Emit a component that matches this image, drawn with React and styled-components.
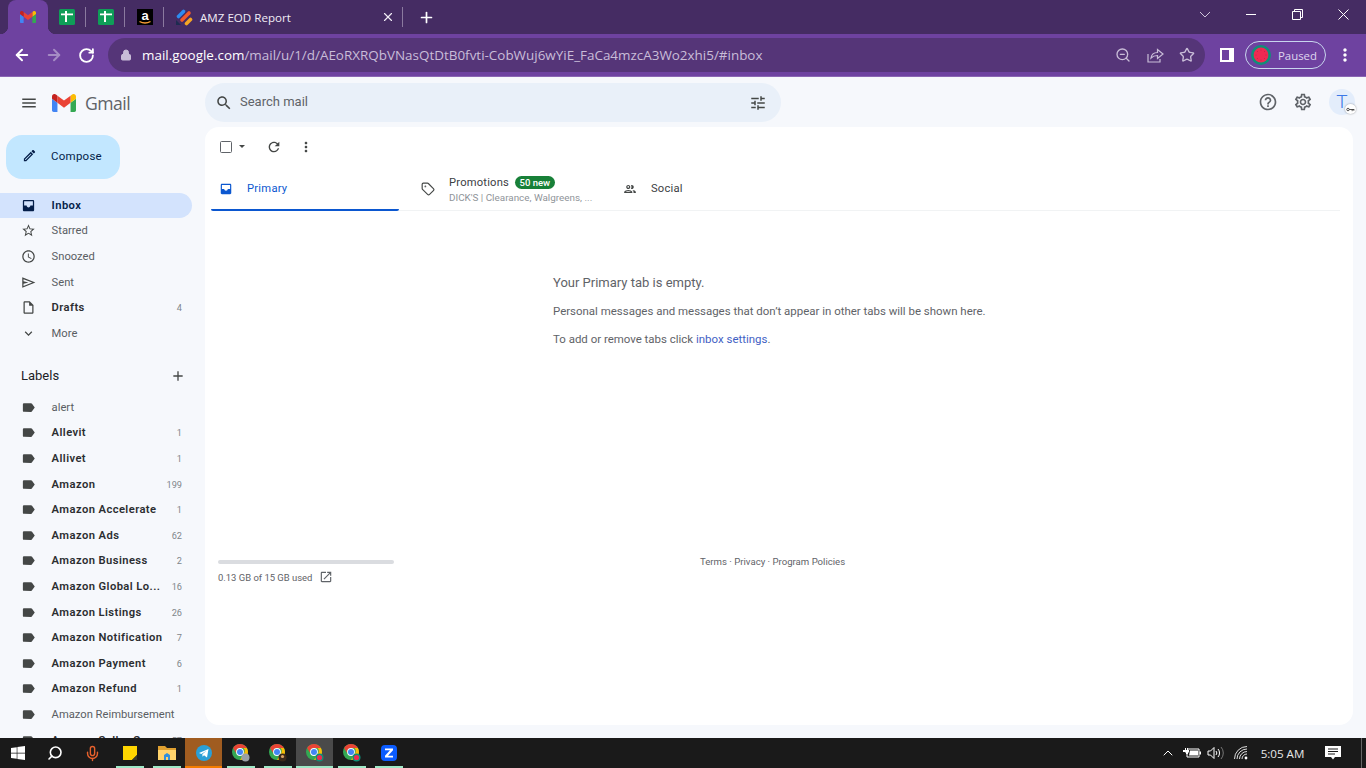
import React from "react";
import styled, { createGlobalStyle } from "styled-components";
import { Tag, Mic, Search, ChevronUp, Lock, Plus, X, ArrowLeft, ArrowRight, RotateCw, ZoomOut, Star } from "lucide-react";
import { FaWindows } from "react-icons/fa";

const ICONS = {
    menu: "M3 18h18v-2H3v2zm0-5h18v-2H3v2zm0-7v2h18V6H3z",
    pencil: "M14.06 9.02l.92.92L5.92 19H5v-.92l9.06-9.06M17.66 3c-.25 0-.51.1-.7.29l-1.83 1.83 3.75 3.75 1.83-1.83c.39-.39.39-1.02 0-1.41l-2.34-2.34c-.2-.2-.45-.29-.71-.29zm-3.6 3.19L3 17.25V21h3.75L17.81 9.94l-3.75-3.75z",
    inbox: "M19 3H5c-1.1 0-2 .9-2 2v14c0 1.1.9 2 2 2h14c1.1 0 2-.9 2-2V5c0-1.1-.9-2-2-2zm0 9h-4c0 1.66-1.35 3-3 3s-3-1.34-3-3H5V5h14v7z",
    star: "M22 9.24l-7.19-.62L12 2 9.19 8.63 2 9.24l5.46 4.73L5.82 21 12 17.27 18.18 21l-1.63-7.03L22 9.24zM12 15.4l-3.76 2.27 1-4.28-3.32-2.88 4.38-.38L12 6.1l1.71 4.04 4.38.38-3.32 2.88 1 4.28L12 15.4z",
    clock: "M11.99 2C6.47 2 2 6.48 2 12s4.47 10 9.99 10C17.52 22 22 17.52 22 12S17.52 2 11.99 2zM12 20c-4.42 0-8-3.58-8-8s3.58-8 8-8 8 3.58 8 8-3.58 8-8 8zm.5-13H11v6l5.25 3.15.75-1.23-4.5-2.67z",
    sent: "M2 3.5L23 12 2 20.5zM4 6.6v3.3l8 2.1-8 2.1v3.3L18 12z",
    draft: "M14 2H6c-1.1 0-1.99.9-1.99 2L4 20c0 1.1.89 2 1.99 2H18c1.1 0 2-.9 2-2V8l-6-6zM6 20V4h7v5h5v11H6z",
    chevron: "M16.59 8.59L12 13.17 7.41 8.59 6 10l6 6 6-6z",
    label: "M17.63 5.84C17.27 5.33 16.67 5 16 5L5 5.01C3.9 5.01 3 5.9 3 7v10c0 1.1.9 1.99 2 1.99L16 19c.67 0 1.27-.33 1.63-.84L22 12l-4.37-6.16z",
    search: "M15.5 14h-.79l-.28-.27C15.41 12.59 16 11.11 16 9.5 16 5.91 13.09 3 9.5 3S3 5.91 3 9.5 5.91 16 9.5 16c1.61 0 3.09-.59 4.23-1.57l.27.28v.79l5 4.99L20.49 19l-4.99-5zm-6 0C7.01 14 5 11.99 5 9.5S7.01 5 9.5 5 14 7.01 14 9.5 11.99 14 9.5 14z",
    tune: "M3 17v2h6v-2H3zM3 5v2h10V5H3zm10 16v-2h8v-2h-8v-2h-2v6h2zM7 9v2H3v2h4v2h2V9H7zm14 4v-2H11v2h10zm-6-4h2V7h4V5h-4V3h-2v6z",
    refresh: "M17.65 6.35C16.2 4.9 14.21 4 12 4c-4.42 0-7.99 3.58-7.99 8s3.57 8 7.99 8c3.73 0 6.84-2.55 7.73-6h-2.08c-.82 2.33-3.04 4-5.65 4-3.31 0-6-2.69-6-6s2.69-6 6-6c1.66 0 3.14.69 4.22 1.78L13 11h7V4l-2.35 2.35z",
    dots: "M12 8c1.1 0 2-.9 2-2s-.9-2-2-2-2 .9-2 2 .9 2 2 2zm0 2c-1.1 0-2 .9-2 2s.9 2 2 2 2-.9 2-2-.9-2-2-2zm0 6c-1.1 0-2 .9-2 2s.9 2 2 2 2-.9 2-2-.9-2-2-2z",
    help: "M11 18h2v-2h-2v2zm1-16C6.48 2 2 6.48 2 12s4.48 10 10 10 10-4.48 10-10S17.52 2 12 2zm0 18c-4.41 0-8-3.59-8-8s3.59-8 8-8 8 3.59 8 8-3.59 8-8 8zm0-14c-2.21 0-4 1.79-4 4h2c0-1.1.9-2 2-2s2 .9 2 2c0 2-3 1.75-3 5h2c0-2.25 3-2.5 3-5 0-2.21-1.79-4-4-4z",
    gear: "M19.43 12.98c.04-.32.07-.64.07-.98 0-.34-.03-.66-.07-.98l2.11-1.65c.19-.15.24-.42.12-.64l-2-3.46c-.09-.16-.26-.25-.44-.25-.06 0-.12.01-.17.03l-2.49 1c-.52-.4-1.08-.73-1.69-.98l-.38-2.65C14.46 2.18 14.25 2 14 2h-4c-.25 0-.46.18-.49.42l-.38 2.65c-.61.25-1.17.59-1.69.98l-2.49-1c-.06-.02-.12-.03-.18-.03-.17 0-.34.09-.43.25l-2 3.46c-.13.22-.07.49.12.64l2.11 1.65c-.04.32-.07.65-.07.98 0 .33.03.66.07.98l-2.11 1.65c-.19.15-.24.42-.12.64l2 3.46c.09.16.26.25.44.25.06 0 .12-.01.17-.03l2.49-1c.52.4 1.08.73 1.69.98l.38 2.65c.03.24.24.42.49.42h4c.25 0 .46-.18.49-.42l.38-2.65c.61-.25 1.17-.59 1.69-.98l2.49 1c.06.02.12.03.18.03.17 0 .34-.09.43-.25l2-3.46c.12-.22.07-.49-.12-.64l-2.11-1.65zm-1.98-1.71c.04.31.05.52.05.73 0 .21-.02.43-.05.73l-.14 1.13.89.7 1.08.84-.7 1.21-1.27-.51-1.04-.42-.9.68c-.43.32-.84.56-1.25.73l-1.06.43-.16 1.13-.2 1.35h-1.4l-.19-1.35-.16-1.13-1.06-.43c-.43-.18-.83-.41-1.23-.71l-.91-.7-1.06.43-1.27.51-.7-1.21 1.08-.84.89-.7-.14-1.13c-.03-.31-.05-.54-.05-.74s.02-.43.05-.73l.14-1.13-.89-.7-1.08-.84.7-1.21 1.27.51 1.04.42.9-.68c.43-.32.84-.56 1.25-.73l1.06-.43.16-1.13.2-1.35h1.39l.19 1.35.16 1.13 1.06.43c.43.18.83.41 1.23.71l.91.7 1.06-.43 1.27-.51.7 1.21-1.07.85-.89.7.14 1.13zM12 8c-2.21 0-4 1.79-4 4s1.79 4 4 4 4-1.79 4-4-1.79-4-4-4zm0 6c-1.1 0-2-.9-2-2s.9-2 2-2 2 .9 2 2-.9 2-2 2z",
    people: "M9 13.75c-2.34 0-7 1.17-7 3.5V19h14v-1.75c0-2.33-4.66-3.5-7-3.5zM4.34 17c.84-.58 2.87-1.25 4.66-1.25s3.82.67 4.66 1.25H4.34zM9 12c1.93 0 3.5-1.57 3.5-3.5S10.93 5 9 5 5.5 6.57 5.5 8.5 7.07 12 9 12zm0-5c.83 0 1.5.67 1.5 1.5S9.83 10 9 10s-1.5-.67-1.5-1.5S8.17 7 9 7zm7.04 6.81c1.16.84 1.96 1.96 1.96 3.44V19h4v-1.75c0-2.02-3.5-3.17-5.96-3.44zM15 12c1.93 0 3.5-1.57 3.5-3.5S16.93 5 15 5c-.54 0-1.04.13-1.5.35.63.89 1 1.98 1 3.15s-.37 2.26-1 3.15c.46.22.96.35 1.5.35z",
    open: "M19 19H5V5h7V3H5c-1.11 0-2 .9-2 2v14c0 1.1.89 2 2 2h14c1.1 0 2-.9 2-2v-7h-2v7zM14 3v2h3.59l-9.83 9.83 1.41 1.41L19 6.41V10h2V3h-7z",
    add: "M19 13h-6v6h-2v-6H5v-2h6V5h2v6h6v2z",
};

const NAV = [
    { name: "Inbox", icon: "inbox", active: true, bold: true },
    { name: "Starred", icon: "star" },
    { name: "Snoozed", icon: "clock" },
    { name: "Sent", icon: "sent" },
    { name: "Drafts", icon: "draft", bold: true, count: 4 },
    { name: "More", icon: "chevron" },
];

const LABELS = [
    { name: "alert" },
    { name: "Allevit", count: 1, bold: true },
    { name: "Allivet", count: 1, bold: true },
    { name: "Amazon", count: 199, bold: true },
    { name: "Amazon Accelerate", count: 1, bold: true },
    { name: "Amazon Ads", count: 62, bold: true },
    { name: "Amazon Business", count: 2, bold: true },
    { name: "Amazon Global Lo...", count: 16, bold: true },
    { name: "Amazon Listings", count: 26, bold: true },
    { name: "Amazon Notification", count: 7, bold: true },
    { name: "Amazon Payment", count: 6, bold: true },
    { name: "Amazon Refund", count: 1, bold: true },
    { name: "Amazon Reimbursement" },
    { name: "Amazon Seller Cen...", count: 57, bold: true },
];

const GlobalStyle = createGlobalStyle`
    html, body {
        margin: 0;
        padding: 0;
        overflow: hidden;
        background: #f6f8fc;
        font-family: Roboto, "Liberation Sans", sans-serif;
    }
    * {
        box-sizing: border-box;
    }
`;

const Page = styled.div`
    width: 1366px;
    height: 768px;
    display: flex;
    flex-direction: column;
    overflow: hidden;
`;

const TabStrip = styled.div`
    height: 34px;
    flex: none;
    display: flex;
    align-items: stretch;
    padding-left: 8px;
    background: #452c63;
`;

const BrowserTab = styled.div`
    position: relative;
    display: flex;
    align-items: center;
    justify-content: ${(p) => (p.$wide ? "flex-start" : "center")};
    width: ${(p) => p.$width}px;
    padding-left: ${(p) => (p.$wide ? "11px" : "0")};
    flex: none;
    ${(p) =>
        p.$active &&
        `
        background: #6e42a0;
        border-radius: 8px 8px 0 0;
        &::before, &::after {
            content: "";
            position: absolute;
            bottom: 0;
            width: 8px;
            height: 8px;
        }
        &::before {
            left: -8px;
            background: radial-gradient(circle at 0 0, transparent 8px, #6e42a0 8.5px);
        }
        &::after {
            right: -8px;
            background: radial-gradient(circle at 100% 0, transparent 8px, #6e42a0 8.5px);
        }
    `}
    ${(p) =>
        p.$sep &&
        `
        &::after {
            content: "";
            position: absolute;
            right: 0;
            top: 7px;
            height: 20px;
            width: 1px;
            background: #8b7a9f;
        }
    `}
`;

const TabTitle = styled.span`
    margin-left: 7px;
    flex: 1;
    color: #f1ecf6;
    font: 11.6px "Open Sans", "Liberation Sans", sans-serif;
`;

const TabClose = styled(X)`
    margin-right: 8px;
    color: #f1ecf6;
`;

const NewTab = styled.div`
    display: flex;
    align-items: center;
    justify-content: center;
    width: 46px;
    color: #fff;
`;

const WindowControls = styled.div`
    margin-left: auto;
    display: flex;
    align-items: center;
    height: 28px;
`;

const WindowButton = styled.div`
    width: 46px;
    height: 28px;
    display: flex;
    align-items: center;
    justify-content: center;
`;

const Toolbar = styled.div`
    height: 43px;
    flex: none;
    display: flex;
    align-items: center;
    padding-left: 6px;
    background: #6e42a0;
    border-bottom: 1px solid #8a66b3;
`;

const NavButton = styled.div`
    width: 32px;
    display: flex;
    justify-content: center;
    color: ${(p) => (p.$dim ? "#a58cc4" : "#ffffff")};
`;

const Omnibox = styled.div`
    margin-left: 6px;
    width: 1097px;
    height: 34px;
    display: flex;
    align-items: center;
    padding: 0 2px 0 12px;
    border-radius: 17px;
    background: #553578;
    color: #c9bdd8;
`;

const Url = styled.div`
    margin-left: 10px;
    flex: 1;
    color: #c9bdd8;
    white-space: nowrap;
    font: 13.45px "Open Sans", "Liberation Sans", sans-serif;
    b {
        color: #fff;
        font-weight: 400;
    }
`;

const OmniAction = styled.div`
    width: 32px;
    display: flex;
    justify-content: center;
`;

const SidePanelIcon = styled.div`
    margin-left: 15px;
    width: 14px;
    height: 14px;
    border: 2px solid #fff;
    border-right-width: 5px;
    background: #6e42a0;
`;

const PausedPill = styled.div`
    margin-left: 11px;
    width: 81px;
    height: 28px;
    display: flex;
    align-items: center;
    padding-left: 5px;
    border: 1px solid #c8d6ee;
    border-radius: 14px;
    color: #dfd5ee;
    font: 11.4px "Open Sans", "Liberation Sans", sans-serif;
`;

const PausedText = styled.span`
    margin-left: 7px;
`;

const MenuDots = styled.div`
    margin-left: 9px;
    display: flex;
    color: #fff;
`;

const Body = styled.div`
    flex: 1;
    min-height: 0;
    display: flex;
    background: #f6f8fc;
`;

const Sidebar = styled.nav`
    width: 205px;
    flex: none;
    overflow: hidden;
`;

const Brand = styled.div`
    height: 50px;
    display: flex;
    align-items: center;
    padding: 2px 0 0 20px;
`;

const BrandGap = styled.span`
    width: 14px;
    flex: none;
`;

const BrandName = styled.span`
    margin-left: 9px;
    color: #5f6368;
    font: 400 17.6px "Open Sans", Roboto, sans-serif;
    letter-spacing: -0.5px;
`;

const Compose = styled.div`
    margin: 8px 0 13.6px 6px;
    width: 114px;
    height: 44px;
    display: flex;
    align-items: center;
    padding: 0 0 2.5px 16px;
    gap: 14px;
    border-radius: 16px;
    background: #c2e7ff;
    color: #041e49;
    font-size: 11.5px;
    letter-spacing: 0.25px;
`;

const SideRow = styled.div`
    width: 192px;
    height: 25.6px;
    display: flex;
    align-items: center;
    padding: 0 10px 0 21px;
    gap: 15.6px;
    font-size: 11.2px;
    white-space: nowrap;
    border-radius: 0 13px 13px 0;
    color: ${(p) => (p.$active ? "#041e49" : p.$bold ? "#2b2d30" : "#5a5e63")};
    font-weight: ${(p) => (p.$bold ? 600 : 400)};
    letter-spacing: ${(p) => (p.$bold ? "0.42px" : "0")};
    background: ${(p) => (p.$active ? "#d3e3fd" : "transparent")};
`;

const RowName = styled.span`
    flex: 1;
    min-width: 0;
`;

const RowCount = styled.span`
    color: #80868b;
    font-size: 9.2px;
    font-weight: 400;
    letter-spacing: 0;
`;

const LabelsHead = styled.div`
    margin-top: 15.4px;
    margin-bottom: 5px;
    width: 192px;
    height: 28px;
    display: flex;
    align-items: center;
    justify-content: space-between;
    padding: 0 6px 0 21px;
    color: #202124;
    font-size: 13px;
`;

const Right = styled.div`
    flex: 1;
    min-width: 0;
    display: flex;
    flex-direction: column;
`;

const TopBar = styled.div`
    height: 50px;
    flex: none;
    display: flex;
    align-items: center;
    padding-top: 1px;
`;

const SearchBox = styled.div`
    width: 576px;
    height: 39px;
    display: flex;
    align-items: center;
    padding: 0 14px 0 10px;
    gap: 7px;
    border-radius: 20px;
    background: #e9f0f9;
    color: #5f6368;
    font-size: 13px;
`;

const SearchText = styled.span`
    flex: 1;
    padding-bottom: 2px;
`;

const TopActions = styled.div`
    margin-left: auto;
    padding: 0 11px 1px 0;
    display: flex;
    align-items: center;
    gap: 15px;
`;

const Avatar = styled.div`
    position: relative;
    width: 26px;
    height: 26px;
    margin-left: 1px;
    border-radius: 50%;
    background: #e3edfb;
    color: #3b78e7;
    font-size: 19px;
    font-weight: 300;
    line-height: 26px;
    text-align: center;
`;

const KeyBadge = styled.div`
    position: absolute;
    right: -1px;
    bottom: 1px;
    width: 11px;
    height: 10px;
    display: flex;
    align-items: center;
    justify-content: center;
    border-radius: 50%;
    background: #fff;
    box-shadow: 0 0 2px rgba(0, 0, 0, 0.4);
`;

const Panel = styled.main`
    flex: 1;
    min-height: 0;
    margin: 0 13px 13px 0;
    display: flex;
    flex-direction: column;
    border-radius: 14px;
    background: #fff;
`;

const MailTools = styled.div`
    height: 39px;
    flex: none;
    display: flex;
    align-items: center;
    padding-left: 15px;
`;

const CheckBox = styled.div`
    width: 12px;
    height: 12px;
    border: 1.6px solid #5f6368;
    border-radius: 1.5px;
`;

const Caret = styled.div`
    margin-left: 7px;
    width: 0;
    height: 0;
    border-left: 3.5px solid transparent;
    border-right: 3.5px solid transparent;
    border-top: 3.5px solid #444746;
`;

const ToolIcon = styled.div`
    display: flex;
    margin-left: ${(p) => p.$gap}px;
`;

const TabsRow = styled.div`
    height: 45px;
    flex: none;
    margin: 0 13px 0 6px;
    display: flex;
    border-bottom: 1px solid #f1f3f4;
`;

const MailTab = styled.div`
    width: ${(p) => p.$width}px;
    height: 45px;
    display: flex;
    align-items: center;
    padding-left: ${(p) => p.$pad}px;
    padding-top: ${(p) => (p.$active ? "2px" : "0")};
    gap: 14px;
    flex: none;
    border-bottom: ${(p) => (p.$active ? "2px solid #0b57d0" : "0")};
    border-radius: ${(p) => (p.$active ? "0 0 2px 2px" : "0")};
`;

const MailTabName = styled.span`
    font-size: 11.2px;
    letter-spacing: ${(p) => (p.$active ? "0.25px" : "0.2px")};
    color: ${(p) => (p.$active ? "#0b57d0" : "#3c4043")};
`;

const PromoStack = styled.div`
    margin-top: 2px;
    display: flex;
    flex-direction: column;
    gap: 3px;
`;

const PromoTop = styled.div`
    display: flex;
    align-items: center;
    gap: 6px;
`;

const NewBadge = styled.span`
    height: 13px;
    padding: 0 4.5px;
    border-radius: 7px;
    background: #188038;
    color: #fff;
    font-size: 9.5px;
    font-weight: 500;
    line-height: 13px;
`;

const PromoSnippet = styled.div`
    color: #8f9499;
    font-size: 9.9px;
    white-space: nowrap;
`;

const Empty = styled.section`
    flex: 1;
    padding: 63px 0 0 348px;
`;

const EmptyTitle = styled.div`
    color: #5f6368;
    font-size: 13px;
    line-height: 18px;
`;

const EmptyText = styled.div`
    margin-top: 11px;
    color: #5f6368;
    font-size: 11.46px;
    line-height: 17px;
    a {
        color: #3f5fc4;
        text-decoration: none;
    }
`;

const Foot = styled.footer`
    display: flex;
    padding: 0 0 141px 13px;
    color: #5f6368;
    font-size: 9.6px;
`;

const Storage = styled.div`
    width: 176px;
    flex: none;
`;

const StorageBar = styled.div`
    height: 4px;
    margin-top: 3px;
    border-radius: 2px;
    background: #dadce0;
`;

const StorageText = styled.div`
    margin-top: 6px;
    display: flex;
    align-items: center;
    gap: 7px;
    font-size: 9.45px;
`;

const Policies = styled.div`
    margin: -1px 0 0 306px;
`;

const TaskBar = styled.div`
    height: 30px;
    flex: none;
    display: flex;
    align-items: stretch;
    background: #1a1a1a;
`;

const TaskItem = styled.div`
    width: 37px;
    flex: none;
    display: flex;
    align-items: center;
    justify-content: center;
    background-color: ${(p) => (p.$kind === "flash" ? "#a05c20" : p.$kind === "focus" ? "#4a4a4a" : "transparent")};
    background-image: ${(p) =>
        p.$kind === "flash"
            ? "linear-gradient(#f57c00, #f57c00)"
            : p.$kind === "focus" || p.$kind === "open"
              ? "linear-gradient(#9ee8c6, #9ee8c6)"
              : "none"};
    background-repeat: no-repeat;
    background-position: center bottom;
    background-size: ${(p) => (p.$kind === "open" ? "28px 2px" : "100% 2px")};
`;

const MirroredSearch = styled(Search)`
    transform: scaleX(-1);
    margin-right: 2px;
`;

const WindowsLogo = styled(FaWindows)`
    margin-right: 1px;
`;

const Tray = styled.div`
    margin-left: auto;
    display: flex;
    align-items: center;
    color: #fff;
`;

const TrayIcon = styled.div`
    display: flex;
    justify-content: center;
    width: ${(p) => p.$width}px;
`;

const Clock = styled.div`
    width: 58px;
    margin-right: 6.5px;
    text-align: center;
    color: #e8e8e8;
    font: 11.6px "Open Sans", "Liberation Sans", sans-serif;
`;

const ShowDesktop = styled.div`
    margin: 0 4px 0 13px;
    width: 1px;
    height: 30px;
    background: #666;
`;

const Svg = styled.svg`
    display: block;
    flex: none;
`;

const Icon = ({ name, size = 14, color = "#444746" }) => (
    <Svg viewBox="0 0 24 24" width={size} height={size} fill={color}>
        <path d={ICONS[name]} />
    </Svg>
);

const GmailLogo = ({ width = 24, height = 18 }) => (
    <Svg viewBox="52 42 88 66" width={width} height={height}>
        <path fill="#4285f4" d="M58 108h14V74L52 59v43c0 3.32 2.69 6 6 6" />
        <path fill="#34a853" d="M120 108h14c3.32 0 6-2.69 6-6V59l-20 15" />
        <path fill="#fbbc04" d="M120 48v26l20-15v-8c0-7.42-8.47-11.65-14.4-7.2" />
        <path fill="#ea4335" d="M72 74V48l24 18 24-18v26L96 92" />
        <path fill="#c5221f" d="M52 51v8l20 15V48l-5.6-4.2c-5.94-4.45-14.4-.22-14.4 7.2" />
    </Svg>
);

const SheetsIcon = () => (
    <Svg viewBox="0 0 16 16" width="16" height="16">
        <rect width="16" height="16" rx="1.5" fill="#0f9d58" />
        <path fill="#fff" d="M6 2h2v2.5h6v1.7H8V13H6V6.2H2V4.5h4z" />
    </Svg>
);

const AmazonIcon = () => (
    <Svg viewBox="0 0 16 16" width="16" height="16">
        <rect width="16" height="16" fill="#000" />
        <text x="8" y="10.5" textAnchor="middle" fontSize="13" fontWeight="700" fontFamily="Liberation Sans" fill="#fff">
            a
        </text>
        <path d="M2.5 12.5c3.5 2 7.5 2 11 0" stroke="#f79c34" strokeWidth="1.4" fill="none" />
    </Svg>
);

const ReportIcon = () => (
    <Svg viewBox="0 0 18 18" width="18" height="18">
        <g strokeLinecap="round" strokeWidth="3.6" fill="none">
            <path d="M3.5 8.5l5-5" stroke="#2d8cf0" />
            <path d="M7 12l7-7" stroke="#f0592a" />
            <path d="M11.5 15.5l4-4" stroke="#f5a623" />
        </g>
        <path d="M1 17v-5l5 5z" fill="#1d2b50" />
    </Svg>
);

const ShareIcon = () => (
    <svg width="17" height="16" viewBox="0 0 17 16" fill="none" stroke="#c9bdd8" strokeWidth="1.2">
        <path d="M1 7v8h12v-3" />
        <path d="M4 11c.5-3.5 3-5.5 6.5-5.5V2.5L16 7l-5.5 4.5V8.5C8 8.5 5.5 9.5 4 11z" />
    </svg>
);

const Watermelon = ({ size = 20 }) => (
    <Svg viewBox="0 0 20 20" width={size} height={size}>
        <circle cx="10" cy="10" r="10" fill="#0f8f78" />
        <circle cx="10" cy="10" r="7.4" fill="#ee2a52" />
        <g fill="#a81c40">
            <circle cx="10" cy="5" r=".45" />
            <circle cx="5" cy="10" r=".45" />
            <circle cx="15" cy="10" r=".45" />
            <circle cx="10" cy="15" r=".45" />
            <circle cx="6.5" cy="6.5" r=".45" />
            <circle cx="13.5" cy="6.5" r=".45" />
            <circle cx="6.5" cy="13.5" r=".45" />
            <circle cx="13.5" cy="13.5" r=".45" />
        </g>
    </Svg>
);

const ChromeIcon = ({ badge }) => (
    <Svg viewBox="0 0 20 20" width="20" height="20">
        <circle cx="9" cy="9" r="8" fill="#34a853" />
        <path fill="#fbbc04" d="M15.9 5A8 8 0 0 1 9 17l3.5-6a4 4 0 0 0-.1-6z" />
        <path fill="#ea4335" d="M2.1 5A8 8 0 0 1 15.9 5H9a4 4 0 0 0-3.6 5.6z" />
        <circle cx="9" cy="9" r="3.9" fill="#fff" />
        <circle cx="9" cy="9" r="3" fill="#4285f4" />
        {badge === "grey" && <circle cx="14.5" cy="14.5" r="4" fill="#9aa0a6" />}
        {badge === "dark" && (
            <g>
                <circle cx="14.5" cy="14.5" r="4" fill="#3c2a1a" />
                <circle cx="14.5" cy="13.5" r="1.6" fill="#d9a066" />
            </g>
        )}
        {badge === "melon" && (
            <g>
                <circle cx="14.5" cy="14.5" r="4" fill="#0f8f78" />
                <circle cx="14.5" cy="14.5" r="2.6" fill="#ee2a52" />
            </g>
        )}
    </Svg>
);

const StickyIcon = () => (
    <Svg viewBox="0 0 14 14" width="14" height="14">
        <path d="M0 0h14v9l-5 5H0z" fill="#ffd600" />
        <path d="M14 9v5H9z" fill="#3a3a2a" />
    </Svg>
);

const FolderIcon = () => (
    <Svg viewBox="0 0 18 16" width="18" height="16">
        <path d="M0 1h7l2 2h9v3H0z" fill="#e0a030" />
        <path d="M0 5h18v10H0z" fill="#ffd36b" />
        <path d="M6 15v-5l3-2 3 2v5h-2v-3H8v3z" fill="#2f8fdc" />
    </Svg>
);

const TelegramIcon = () => (
    <Svg viewBox="0 0 16 16" width="16" height="16">
        <circle cx="8" cy="8" r="8" fill="#2a9fd6" />
        <path d="M3 8l9.5-4-1.5 8.5-3-2.2-1.4 1.4-.3-2.4 4.3-3.5-5.3 3.1z" fill="#fff" />
    </Svg>
);

const ZoomIcon = () => (
    <Svg viewBox="0 0 16 16" width="16" height="16">
        <rect width="16" height="16" rx="4" fill="#0b5cff" />
        <path d="M4 3.5h8v1.8L7 10.7h5v1.8H4v-1.8L9 5.3H4z" fill="#fff" />
    </Svg>
);

const BatteryIcon = () => (
    <Svg viewBox="0 0 18 12" width="18" height="12">
        <path d="M0 3h2V1h1v2h1V1h1v2h1v2l-1 1v1H3V6L2 5H0z" fill="#fff" />
        <path d="M5 2h11v8H4V7" fill="none" stroke="#fff" />
        <path d="M7 3.5h8v5H6z" fill="#fff" />
        <path d="M16.5 4.5h1.5v3h-1.5z" fill="#fff" />
    </Svg>
);

const VolumeIcon = () => (
    <Svg viewBox="0 0 18 14" width="18" height="14" fill="none" stroke="#fff" strokeWidth="1">
        <path d="M1 5h2.5L7 1.5v11L3.5 9H1z" />
        <path d="M9 5a3 3 0 0 1 0 4M11 3a6 6 0 0 1 0 8" />
        <path d="M14 1a9 9 0 0 1 0 12" stroke="#777" />
    </Svg>
);

const WifiIcon = () => (
    <Svg viewBox="0 0 14 14" width="14" height="14" fill="none" stroke="#ddd" strokeWidth="1">
        <path d="M.5 13A12.5 12.5 0 0 1 13 .5" />
        <path d="M3 13A10 10 0 0 1 13 3" />
        <path d="M5.5 13A7.5 7.5 0 0 1 13 5.5" />
        <path d="M8 13a5 5 0 0 1 5-5" />
        <circle cx="12" cy="12" r="1.4" fill="#fff" stroke="none" />
    </Svg>
);

const NotifyIcon = () => (
    <Svg viewBox="0 0 16 16" width="16" height="16">
        <path d="M0 1h16v11h-6l-2 2.5L6 12H0z" fill="#fff" />
        <path d="M3 4h10M3 6.5h10M3 9h7" stroke="#1a1a1a" />
    </Svg>
);

const KeyIcon = () => (
    <Svg viewBox="0 0 10 6" width="9" height="5">
        <circle cx="2" cy="3" r="1.5" fill="none" stroke="#333" />
        <path d="M3.5 3h6M7 3v2M9 3v1.5" stroke="#333" />
    </Svg>
);

const App = () => {
    return (
        <Page>
            <GlobalStyle />
            <TabStrip>
                <BrowserTab $active $width={40}>
                    <GmailLogo width={16} height={12} />
                </BrowserTab>
                <BrowserTab $width={38} $sep>
                    <SheetsIcon />
                </BrowserTab>
                <BrowserTab $width={39} $sep>
                    <SheetsIcon />
                </BrowserTab>
                <BrowserTab $width={39} $sep>
                    <AmazonIcon />
                </BrowserTab>
                <BrowserTab $width={239} $sep $wide>
                    <ReportIcon />
                    <TabTitle>AMZ EOD Report</TabTitle>
                    <TabClose size={14} />
                </BrowserTab>
                <NewTab>
                    <Plus size={17} strokeWidth={2.4} />
                </NewTab>
                <WindowControls>
                    <WindowButton>
                        <svg width="12" height="7" viewBox="0 0 12 7" fill="none" stroke="#cfc6da">
                            <path d="M1 1l5 5 5-5" />
                        </svg>
                    </WindowButton>
                    <WindowButton>
                        <svg width="10" height="10" viewBox="0 0 10 10" stroke="#fff">
                            <path d="M0 5.5h10" />
                        </svg>
                    </WindowButton>
                    <WindowButton>
                        <svg width="11" height="11" viewBox="0 0 11 11" fill="none" stroke="#fff">
                            <path d="M.5 2.5h8v8h-8zM2.5 2.5v-2h8v8h-2" />
                        </svg>
                    </WindowButton>
                    <WindowButton>
                        <svg width="11" height="11" viewBox="0 0 11 11" stroke="#fff">
                            <path d="M.5.5l10 10M10.5.5l-10 10" />
                        </svg>
                    </WindowButton>
                </WindowControls>
            </TabStrip>

            <Toolbar>
                <NavButton>
                    <ArrowLeft size={18} strokeWidth={2.6} />
                </NavButton>
                <NavButton $dim>
                    <ArrowRight size={18} strokeWidth={2.6} />
                </NavButton>
                <NavButton>
                    <RotateCw size={17} strokeWidth={2.6} />
                </NavButton>
                <Omnibox>
                    <Lock size={12} fill="#c9bdd8" />
                    <Url>
                        <b>mail.google.com</b>/mail/u/1/d/AEoRXRQbVNasQtDtB0fvti-CobWuj6wYiE_FaCa4mzcA3Wo2xhi5/#inbox
                    </Url>
                    <OmniAction>
                        <ZoomOut size={16} />
                    </OmniAction>
                    <OmniAction>
                        <ShareIcon />
                    </OmniAction>
                    <OmniAction>
                        <Star size={16} />
                    </OmniAction>
                </Omnibox>
                <SidePanelIcon />
                <PausedPill>
                    <Watermelon />
                    <PausedText>Paused</PausedText>
                </PausedPill>
                <MenuDots>
                    <Icon name="dots" size={20} color="#fff" />
                </MenuDots>
            </Toolbar>

            <Body>
                <Sidebar>
                    <Brand>
                        <Icon name="menu" size={18} color="#444746" />
                        <BrandGap />
                        <GmailLogo />
                        <BrandName>Gmail</BrandName>
                    </Brand>
                    <Compose>
                        <Icon name="pencil" size={15} color="#041e49" />
                        Compose
                    </Compose>
                    {NAV.map((item) => (
                        <SideRow key={item.name} $active={item.active} $bold={item.bold}>
                            <Icon name={item.icon} size={15} color={item.active ? "#041e49" : "#444746"} />
                            <RowName>{item.name}</RowName>
                            {item.count && <RowCount>{item.count}</RowCount>}
                        </SideRow>
                    ))}
                    <LabelsHead>
                        Labels
                        <Icon name="add" size={16} color="#444746" />
                    </LabelsHead>
                    {LABELS.map((item) => (
                        <SideRow key={item.name} $bold={item.bold}>
                            <Icon name="label" size={15} color="#444746" />
                            <RowName>{item.name}</RowName>
                            {item.count && <RowCount>{item.count}</RowCount>}
                        </SideRow>
                    ))}
                </Sidebar>

                <Right>
                    <TopBar>
                        <SearchBox>
                            <Icon name="search" size={18} color="#444746" />
                            <SearchText>Search mail</SearchText>
                            <Icon name="tune" size={18} color="#444746" />
                        </SearchBox>
                        <TopActions>
                            <Icon name="help" size={20} color="#5f6368" />
                            <Icon name="gear" size={20} color="#5f6368" />
                            <Avatar>
                                T
                                <KeyBadge>
                                    <KeyIcon />
                                </KeyBadge>
                            </Avatar>
                        </TopActions>
                    </TopBar>

                    <Panel>
                        <MailTools>
                            <CheckBox />
                            <Caret />
                            <ToolIcon $gap={21}>
                                <Icon name="refresh" size={16} color="#444746" />
                            </ToolIcon>
                            <ToolIcon $gap={16}>
                                <Icon name="dots" size={16} color="#444746" />
                            </ToolIcon>
                        </MailTools>
                        <TabsRow>
                            <MailTab $active $width={188} $pad={8}>
                                <Icon name="inbox" size={14} color="#0b57d0" />
                                <MailTabName $active>Primary</MailTabName>
                            </MailTab>
                            <MailTab $width={202} $pad={22}>
                                <Tag size={14} color="#444746" />
                                <PromoStack>
                                    <PromoTop>
                                        <MailTabName>Promotions</MailTabName>
                                        <NewBadge>50 new</NewBadge>
                                    </PromoTop>
                                    <PromoSnippet>DICK'S | Clearance, Walgreens, ...</PromoSnippet>
                                </PromoStack>
                            </MailTab>
                            <MailTab $width={200} $pad={22}>
                                <Icon name="people" size={14} color="#444746" />
                                <MailTabName>Social</MailTabName>
                            </MailTab>
                        </TabsRow>
                        <Empty>
                            <EmptyTitle>Your Primary tab is empty.</EmptyTitle>
                            <EmptyText>Personal messages and messages that don’t appear in other tabs will be shown here.</EmptyText>
                            <EmptyText>
                                To add or remove tabs click <a href="#settings">inbox settings</a>.
                            </EmptyText>
                        </Empty>
                        <Foot>
                            <Storage>
                                <StorageBar />
                                <StorageText>
                                    0.13 GB of 15 GB used
                                    <Icon name="open" size={14} color="#5f6368" />
                                </StorageText>
                            </Storage>
                            <Policies>Terms · Privacy · Program Policies</Policies>
                        </Foot>
                    </Panel>
                </Right>
            </Body>

            <TaskBar>
                <TaskItem>
                    <WindowsLogo size={16} color="#fff" />
                </TaskItem>
                <TaskItem>
                    <MirroredSearch size={16} color="#fff" strokeWidth={2.4} />
                </TaskItem>
                <TaskItem>
                    <Mic size={17} color="#e8612c" />
                </TaskItem>
                <TaskItem $kind="open">
                    <StickyIcon />
                </TaskItem>
                <TaskItem $kind="open">
                    <FolderIcon />
                </TaskItem>
                <TaskItem $kind="flash">
                    <TelegramIcon />
                </TaskItem>
                <TaskItem $kind="open">
                    <ChromeIcon badge="grey" />
                </TaskItem>
                <TaskItem $kind="open">
                    <ChromeIcon badge="dark" />
                </TaskItem>
                <TaskItem $kind="focus">
                    <ChromeIcon badge="melon" />
                </TaskItem>
                <TaskItem $kind="open">
                    <ChromeIcon badge="melon" />
                </TaskItem>
                <TaskItem $kind="open">
                    <ZoomIcon />
                </TaskItem>
                <Tray>
                    <TrayIcon $width={24}>
                        <ChevronUp size={16} strokeWidth={1.5} />
                    </TrayIcon>
                    <TrayIcon $width={24}>
                        <BatteryIcon />
                    </TrayIcon>
                    <TrayIcon $width={24}>
                        <VolumeIcon />
                    </TrayIcon>
                    <TrayIcon $width={26}>
                        <WifiIcon />
                    </TrayIcon>
                    <Clock>5:05 AM</Clock>
                    <TrayIcon $width={30}>
                        <NotifyIcon />
                    </TrayIcon>
                    <ShowDesktop />
                </Tray>
            </TaskBar>
        </Page>
    );
};

export default App;
